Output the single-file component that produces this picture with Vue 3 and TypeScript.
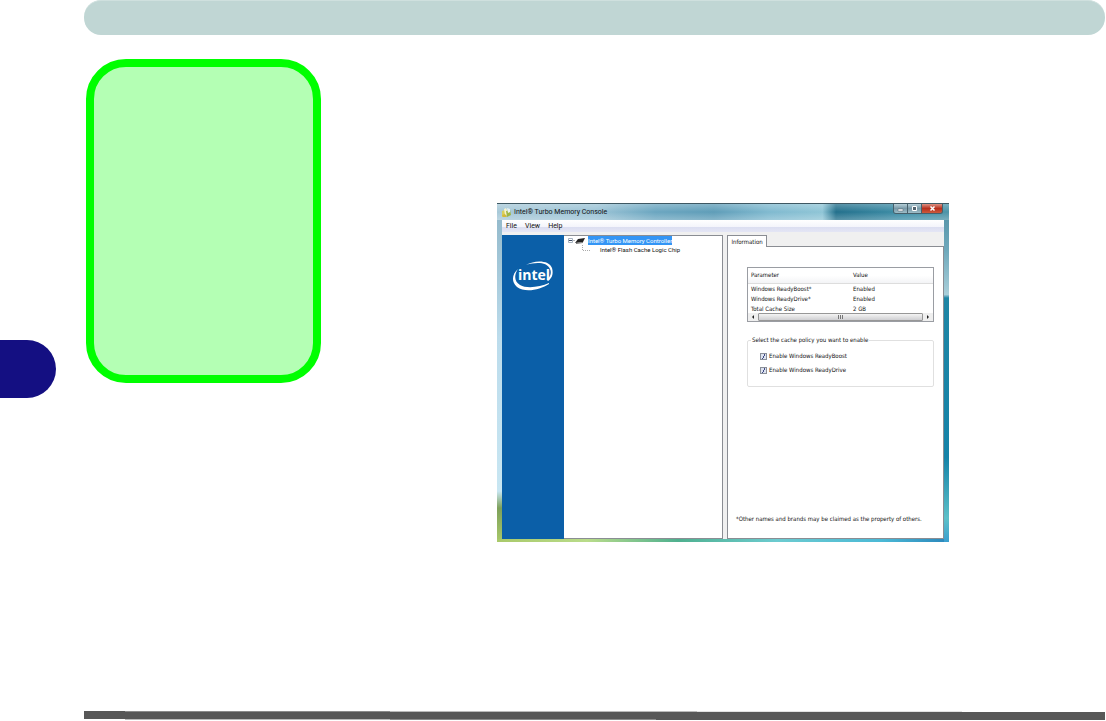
<script setup lang="ts">
import { ref } from 'vue'

interface Row { parameter: string; value: string }
interface Policy { id: string; label: string }

const menus: string[] = ['File', 'View', 'Help']
const rows: Row[] = [
  { parameter: 'Windows ReadyBoost*', value: 'Enabled' },
  { parameter: 'Windows ReadyDrive*', value: 'Enabled' },
  { parameter: 'Total Cache Size', value: '2 GB' },
]
const policies: Policy[] = [
  { id: 'boost', label: 'Enable Windows ReadyBoost' },
  { id: 'drive', label: 'Enable Windows ReadyDrive' },
]
const enabled = ref<string[]>(['boost', 'drive'])
</script>

<template>
  <div class="page">
    <div class="gutter"><div class="chapter-tab"></div></div>
    <div class="body">
      <header class="banner"></header>
      <main class="content">
        <aside class="note"></aside>
        <section class="window" aria-label="Intel Turbo Memory Console">
          <div class="titlebar">
            <svg class="app-icon" viewBox="0 0 11 11" aria-hidden="true">
              <path d="M1 4l3-1 1 6-4 1z" fill="#d9cf5a" />
              <path d="M3 2l2-1 1 2v5L4 8z" fill="#f6f3cf" />
              <path d="M5 4l4-1 1 5-4 2z" fill="#9fb545" />
              <path d="M6 1l3 1v3L7 6z" fill="#e9f2f4" />
              <path d="M1 8l3-1 2 3H2z" fill="#d3b93b" />
            </svg>
            <h1>Intel® Turbo Memory Console</h1>
            <div class="controls">
              <button type="button" aria-label="Minimize"><svg viewBox="0 0 13 9"><path d="M4 5h5v2H4z" fill="#fff" stroke="#52636d" stroke-width=".5" /></svg></button>
              <button type="button" aria-label="Maximize"><svg viewBox="0 0 13 9"><path d="M4.500 2.500h4v4h-4z" fill="#52636d" stroke="#fff" /></svg></button>
              <button type="button" class="close" aria-label="Close"><svg viewBox="0 0 13 9"><path d="M4.500 2.500l4 4M8.500 2.500l-4 4" stroke="#fff" stroke-width="1.500" /></svg></button>
            </div>
          </div>
          <nav class="menubar">
            <button v-for="m in menus" :key="m" type="button">{{ m }}</button>
          </nav>
          <div class="client">
            <div class="brand">
              <svg viewBox="0 0 42 34" role="img" aria-label="Intel logo">
                <path d="M14 6C23 1 37 1 40 9c2 7-1 11-4 13l-1-1c3-3 5-7 3-11C35 3 24 3 14 6z" fill="#fff" />
                <path d="M6 10C0 15-1 23 5 28c8 6 23 3 32-3v-1C28 28 15 30 8 26 2 22 2 16 6 10z" fill="#fff" />
                <text x="6" y="21" class="logo-word">intel</text>
              </svg>
            </div>
            <ul class="tree">
              <li>
                <svg class="twist" viewBox="0 0 22 9" aria-hidden="true">
                  <path d="M2.500 2.500h4v4h-4z" fill="#fff" stroke="#a7b3c0" />
                  <path d="M3 4.500h3" stroke="#3c4b66" />
                  <path d="M7 4.500h2" stroke="#bbb" />
                  <path d="M12 3l7-1-2 4-8 1z" fill="#222" />
                  <path d="M10 7l7-1v1l-7 1z" fill="#777" />
                </svg>
                <span class="selected">Intel® Turbo Memory Controller</span>
              </li>
              <li class="child">
                <svg class="branch" viewBox="0 0 9 9" aria-hidden="true"><path d="M.5 0v5.500H8" fill="none" stroke="#aaa" stroke-dasharray="1 1" /></svg>
                <span>Intel® Flash Cache Logic Chip</span>
              </li>
            </ul>
            <div class="details">
              <div class="tabs" role="tablist"><button type="button" role="tab" aria-selected="true">Information</button></div>
              <div class="panel">
                <div class="list">
                  <table>
                    <thead><tr><th>Parameter</th><th>Value</th></tr></thead>
                    <tbody><tr v-for="r in rows" :key="r.parameter"><td>{{ r.parameter }}</td><td>{{ r.value }}</td></tr></tbody>
                  </table>
                  <div class="scroll">
                    <button type="button" aria-label="Scroll left"><svg viewBox="0 0 10 8"><path d="M6 2v4L4 4z" fill="#222" /></svg></button>
                    <div class="thumb"><i></i><i></i><i></i></div>
                    <button type="button" aria-label="Scroll right"><svg viewBox="0 0 10 8"><path d="M4 2v4l2-2z" fill="#222" /></svg></button>
                  </div>
                </div>
                <fieldset>
                  <legend>Select the cache policy you want to enable</legend>
                  <label v-for="p in policies" :key="p.id" :for="p.id">
                    <input :id="p.id" v-model="enabled" type="checkbox" :value="p.id" />
                    <span>{{ p.label }}</span>
                  </label>
                </fieldset>
                <p class="legal">*Other names and brands may be claimed as the property of others.</p>
              </div>
            </div>
          </div>
        </section>
      </main>
      <footer class="rule"></footer>
    </div>
  </div>
</template>

<style>
body { margin: 0; background: #fff; }
</style>

<style scoped>
* { box-sizing: border-box; }
.page { display: flex; min-height: 100vh; font: 7px/10px Roboto, sans-serif; color: #111; }
button { margin: 0; padding: 0; border: 0; background: none; font: inherit; color: inherit; }
svg { display: block; }
.gutter { flex: 0 0 84px; padding-top: 340px; }
.chapter-tab { width: 56px; height: 58px; border-radius: 0 29px 29px 0; background: #140f82; }
.body { flex: 1; display: flex; flex-direction: column; padding-right: 1px; padding-bottom: 1px; }
.banner { height: 35px; border-radius: 17px; background: #c0d6d4; border-top: 1px solid #cfe0de; }
.content { flex: 1; display: flex; align-items: flex-start; padding: 24px 156px 0 2px; }
.note { flex: 0 0 235px; height: 324px; border: 8px solid #0f0; border-radius: 40px; background: #b4ffb4; }
.rule { height: 9px; background: linear-gradient(90deg, #585858 0 4%, #8b8b8b 4% 30%, #bbb 30% 60%, #e2e2e2 60% 86%, #fff 86%) top / 100% 1px no-repeat, linear-gradient(90deg, #fff 0 4%, #bbb 4% 30%, #8b8b8b 30% 56%, #585858 56%) bottom / 100% 1px no-repeat, #585858; }

.window {
  flex: 1; min-width: 0; margin: 144px 0 0 176px; padding: 0 5px 3px;
  background:
    linear-gradient(#4f8fa5, #6fa9bb 14%, #a9cfda 27%, #1f86a5 28%, #1583a8 75%, #5cc0c8 93%, #3a9fcf) right / 5px 100% no-repeat,
    linear-gradient(90deg, #a9c96a, #b9dc8a 20%, #4fb08f 40%, #6ccbd0 62%, #4bb9d6 85%, #2a86bb) bottom / 100% 3px no-repeat,
    linear-gradient(#8fb6c8, #bcdcec 40%, #c8e6f2 85%, #7da05a 90%, #a9c96a);
}
.titlebar {
  display: flex; align-items: center; height: 17px; margin: 0 -5px; padding-left: 4px; border-top: 1px solid #3e5863;
  background: linear-gradient(rgba(255,255,255,.25), rgba(255,255,255,0) 50%, rgba(255,255,255,.25)), linear-gradient(90deg, #a8c9d8, #9cc4d6 22%, #6ba6c0 35%, #5f9db8 48%, #7fb9cf 60%, #8fc5d6 72%, #23708c 75%, #3f8fa8 90%, #4d94a8);
}
.app-icon { width: 11px; height: 11px; margin-right: 2px; }
h1 { flex: 1; margin: 0; font-size: 7px; font-weight: 400; }
.controls { display: flex; align-self: flex-start; margin-right: 6px; border: 1px solid #47606b; border-top: 0; border-radius: 0 0 3px 3px; overflow: hidden; }
.controls button { width: 14px; height: 9px; border-right: 1px solid #47606b; background: linear-gradient(#b5cfd8, #7a9aa8 50%, #9dbdc8); }
.controls .close { width: 20px; border: 0; background: linear-gradient(#dd9183, #b8301d 50%, #cc5a3c); }
.controls svg { width: 13px; height: 9px; margin: 0 auto; }
.menubar { display: flex; gap: 8px; height: 15px; padding: 0 4px 4px; background: linear-gradient(#fff, #f4f5fb 45%, #dcdff1 50%, #e4e6f5 80%, #f0f0f0 82%); }
.client { display: grid; grid-template-columns: 62px 159fr 4px 217fr; height: 304px; background: #f0f0f0; }
.brand { padding: 24px 10px; background: #0b5fa8; }
.brand svg { width: 42px; height: 34px; }
.logo-word { font: 700 14px "Open Sans", sans-serif; fill: #fff; }
.tree { min-width: 0; margin: 0; padding: 0 0 0 2px; border: 1px solid #8a8d93; border-left: 0; background: #fff; list-style: none; }
.tree li { display: flex; height: 9px; line-height: 9px; white-space: nowrap; font-size: 6px; }
.twist { width: 22px; height: 9px; }
.selected { background: #3395f5; color: #fff; }
.tree .child { padding-left: 16px; }
.branch { width: 9px; height: 9px; margin-right: 9px; }
.details { grid-column: 4; min-width: 0; display: flex; flex-direction: column; font-family: "DejaVu Sans Condensed", "DejaVu Sans", sans-serif; font-size: 6px; }
.tabs { display: flex; height: 11px; }
.tabs button { width: 40px; height: 12px; border: 1px solid #8a8d93; border-bottom: 0; background: #fff; z-index: 1; }
.panel { flex: 1; display: flex; flex-direction: column; padding: 20px 9px 14px 19px; border: 1px solid #8a8d93; background: #fff; }
.list { height: 55px; border: 1px solid #9a9da3; }
table { width: 100%; border-collapse: collapse; table-layout: fixed; line-height: 10px; }
th, td { height: 10px; padding: 0 0 0 3px; text-align: left; font-weight: 400; }
th { height: 15px; background: linear-gradient(#fff 50%, #f3f4f6); border-bottom: 1px solid #ddd; }
tbody tr { line-height: 9px; }
th:first-child { width: 102px; }
.scroll { display: flex; height: 8px; background: #efefef; }
.scroll button, .scroll svg { width: 10px; height: 8px; }
.thumb { flex: 1; display: flex; gap: 1px; justify-content: center; align-items: center; border: 1px solid #979797; border-radius: 1px; background: linear-gradient(#f4f4f4, #cfcfd2); }
.thumb i { width: 1px; height: 4px; background: #777; }
fieldset { min-width: 0; height: 52px; margin: 13px 0 0; padding: 6px 12px 0; border: 1px solid #e0e0e0; border-radius: 2px; }
legend { margin-left: -9px; padding: 0 1px; }
label { display: flex; align-items: center; height: 10px; margin-bottom: 4px; }
input { appearance: none; width: 7px; height: 7px; margin: 0 2px 0 0; border: 1px solid #8b9099; background: #dde3f0; }
input:checked { background: linear-gradient(115deg, #dde3f0 45%, #404a84 45% 62%, #dde3f0 62%); }
.legal { margin: auto 0 0 -11px; white-space: nowrap; }
</style>
